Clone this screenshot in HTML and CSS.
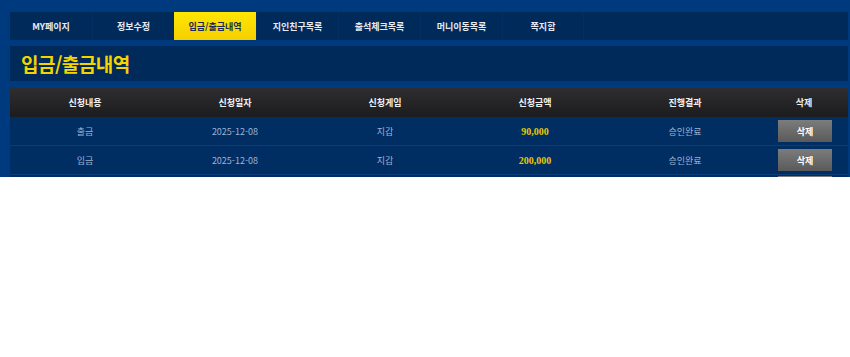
FILE: index.html
```html
<!DOCTYPE html>
<html lang="ko">
<head>
<meta charset="utf-8">
<link rel="stylesheet" href="styles.css">
</head>
<body>
<div class="frame">
  <nav class="menu">
    <a class="item">MY페이지</a>
    <a class="item">정보수정</a>
    <a class="item active">입금/출금내역</a>
    <a class="item">지인친구목록</a>
    <a class="item">출석체크목록</a>
    <a class="item">머니이동목록</a>
    <a class="item">쪽지함</a>
  </nav>
  <div class="title">입금/출금내역</div>
  <div class="table">
    <div class="row head">
      <div class="cell">신청내용</div>
      <div class="cell">신청일자</div>
      <div class="cell">신청게임</div>
      <div class="cell">신청금액</div>
      <div class="cell">진행결과</div>
      <div class="cell">삭제</div>
    </div>
    <div class="row">
      <div class="cell">출금</div>
      <div class="cell">2025-12-08</div>
      <div class="cell">지갑</div>
      <div class="cell amount">90,000</div>
      <div class="cell">승인완료</div>
      <div class="cell"><span class="btn">삭제</span></div>
    </div>
    <div class="row">
      <div class="cell">입금</div>
      <div class="cell">2025-12-08</div>
      <div class="cell">지갑</div>
      <div class="cell amount">200,000</div>
      <div class="cell">승인완료</div>
      <div class="cell"><span class="btn">삭제</span></div>
    </div>
    <div class="row partial">
      <div class="cell"></div>
      <div class="cell"></div>
      <div class="cell"></div>
      <div class="cell"></div>
      <div class="cell"></div>
      <div class="cell"><span class="btn"></span></div>
    </div>
  </div>
</div>
</body>
</html>
```
FILE: styles.css
```css
html, body {
  margin: 0;
  padding: 0;
  background: #ffffff;
}
.frame {
  height: 177px;
  overflow: hidden;
  background: #003a7e;
  padding: 12px 2px 0 10px;
  box-sizing: border-box;
  font-family: "Noto Sans CJK KR", "Noto Sans", sans-serif;
}
.menu {
  display: flex;
  height: 28px;
  background: #002a5a;
}
.item {
  width: 82px;
  display: flex;
  align-items: center;
  justify-content: center;
  color: #e6ecf5;
  font-size: 9px;
  font-weight: 700;
  border-left: 1px solid #032f60;
  box-sizing: border-box;
}
.item:first-child {
  border-left: none;
}
.item:last-child {
  border-right: 1px solid #032f60;
}
.item.active {
  background: linear-gradient(180deg, #ffe600 0%, #f5d000 100%);
  color: #1a2a55;
  border-left: none;
}
.title {
  margin-top: 6px;
  height: 35px;
  background: #002a5a;
  color: #f5d400;
  font-size: 19px;
  font-weight: 700;
  display: flex;
  align-items: center;
  padding-left: 11px;
  letter-spacing: -0.5px;
}
.table {
  margin-top: 7px;
}
.row {
  display: grid;
  grid-template-columns: 150px 150px 150px 150px 150px 88px;
  height: 29px;
  background: #002d62;
  border-bottom: 1px solid #0b3e78;
  box-sizing: border-box;
}
.row.head {
  background: linear-gradient(180deg, #2e2e30 0%, #1c1c1e 100%);
  border-bottom: none;
}
.row.partial .cell {
  align-items: flex-start;
}
.row.partial .btn {
  margin-top: 1px;
}
.cell {
  display: flex;
  align-items: center;
  justify-content: center;
  color: #9eb3d2;
  font-size: 9px;
}
.head .cell {
  color: #f0f0f0;
  font-weight: 700;
}
.amount {
  color: #e8c800;
  font-family: "Liberation Serif", serif;
  font-weight: 700;
  font-size: 10px;
}
.btn {
  width: 54px;
  height: 22px;
  display: flex;
  align-items: center;
  justify-content: center;
  background: linear-gradient(180deg, #7c7c7c 0%, #5a5a5a 100%);
  color: #ffffff;
  font-weight: 700;
  font-size: 9px;
  margin-left: 2px;
}
```
